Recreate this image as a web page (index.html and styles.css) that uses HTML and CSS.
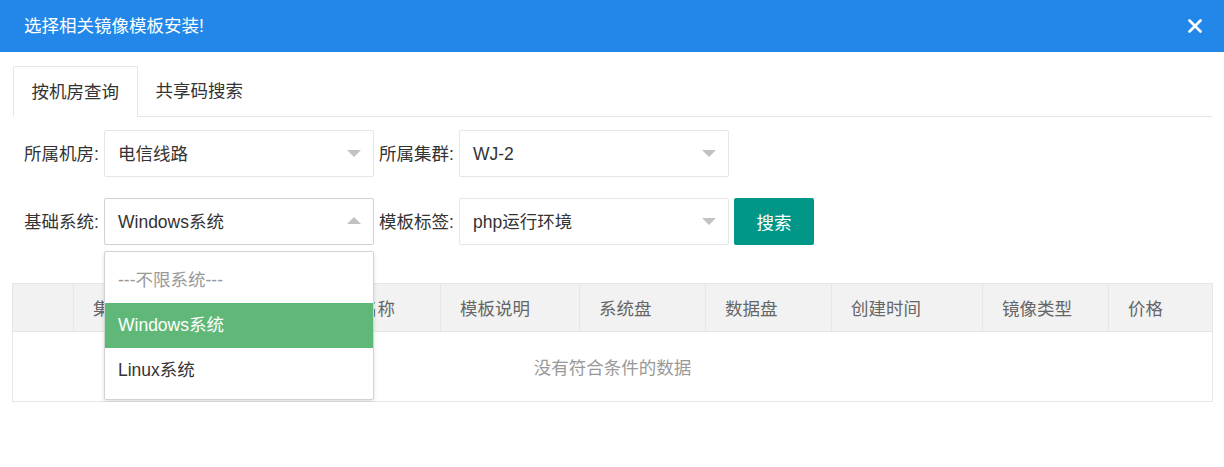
FILE: index.html
```html
<!DOCTYPE html>
<html lang="zh-CN">
<head>
<meta charset="utf-8">
<title>选择相关镜像模板安装!</title>
<link rel="stylesheet" href="styles.css">
</head>
<body>
<div class="layer">
  <div class="layer-title">
    <span class="title-text">选择相关镜像模板安装!</span>
    <span class="close" aria-label="关闭">
      <svg width="14" height="14" viewBox="0 0 14 14"><path d="M1.5 1.5L12.5 12.5M12.5 1.5L1.5 12.5" stroke="#fff" stroke-width="2.6" stroke-linecap="round"/></svg>
    </span>
  </div>
  <div class="layer-content">
    <ul class="tabs">
      <li class="tab active">按机房查询</li>
      <li class="tab">共享码搜索</li>
    </ul>
    <div class="form">
      <div class="form-row">
        <label class="label">所属机房:</label>
        <div class="select"><span class="value">电信线路</span><i class="arrow"></i></div>
        <label class="label label-inner">所属集群:</label>
        <div class="select"><span class="value">WJ-2</span><i class="arrow"></i></div>
      </div>
      <div class="form-row row-two">
        <label class="label">基础系统:</label>
        <div class="select open">
          <span class="value">Windows系统</span><i class="arrow up"></i>
          <dl class="options">
            <dd class="opt placeholder">---不限系统---</dd>
            <dd class="opt selected">Windows系统</dd>
            <dd class="opt">Linux系统</dd>
          </dl>
        </div>
        <label class="label label-inner">模板标签:</label>
        <div class="select"><span class="value">php运行环境</span><i class="arrow"></i></div>
        <button class="btn">搜索</button>
      </div>
    </div>
    <table class="table">
      <thead>
        <tr>
          <th class="c1"></th>
          <th class="c2">集群</th>
          <th class="c3">模板名称</th>
          <th class="c4">模板说明</th>
          <th class="c5">系统盘</th>
          <th class="c6">数据盘</th>
          <th class="c7">创建时间</th>
          <th class="c8">镜像类型</th>
          <th class="c9">价格</th>
        </tr>
      </thead>
      <tbody>
        <tr><td class="none" colspan="9">没有符合条件的数据</td></tr>
      </tbody>
    </table>
  </div>
</div>
</body>
</html>
```
FILE: styles.css
```css
* { box-sizing: border-box; }
html, body { margin: 0; padding: 0; background: #fff; }
body {
  font-family: "Liberation Sans", "Noto Sans CJK SC", sans-serif;
  font-size: 17.5px;
  color: #333;
}
.layer { width: 1224px; }
.layer-title {
  height: 52px;
  background: #2287e9;
  color: #fff;
  display: flex;
  align-items: center;
  justify-content: space-between;
  padding: 0 22px 0 24px;
}
.title-text { font-size: 17.5px; line-height: 24px; }
.close { display: flex; width: 14px; height: 14px; }
.layer-content { padding: 14px 12px 0 12px; }
.tabs {
  list-style: none;
  margin: 0 0 0 1px;
  padding: 0;
  display: flex;
  height: 51px;
  border-bottom: 1px solid #e6e6e6;
}
.tab {
  height: 51px;
  line-height: 50px;
  padding: 0 18px;
  color: #333;
  position: relative;
}
.tab.active {
  border: 1px solid #e6e6e6;
  border-bottom: none;
  border-radius: 2px 2px 0 0;
  background: #fff;
  height: 51px;
  margin-bottom: -1px;
  padding: 0 17.5px;
}
.form { padding: 13px 0 0 6px; }
.form-row { display: flex; align-items: center; height: 47px; }
.row-two { margin-top: 21px; }
.label {
  width: 86px;
  flex: none;
  padding: 0 0 0 6px;
  line-height: 24px;
  white-space: nowrap;
  color: #333;
}
.label-inner { width: 85px; padding-left: 5px; }
.select {
  width: 270px;
  flex: none;
  height: 47px;
  border: 1px solid #e6e6e6;
  border-radius: 2px;
  background: #fff;
  display: flex;
  align-items: center;
  padding-left: 13px;
  position: relative;
}
.select.open { border-color: #d2d2d2; }
.value { line-height: 24px; color: #333; }
.arrow {
  position: absolute;
  right: 12px;
  top: 19px;
  width: 0;
  height: 0;
  border-left: 7.5px solid transparent;
  border-right: 7.5px solid transparent;
  border-top: 7.5px solid #c2c2c2;
}
.arrow.up {
  top: 18px;
  border-top: none;
  border-bottom: 7.5px solid #c2c2c2;
}
.options {
  position: absolute;
  left: -1px;
  top: 52px;
  width: 270px;
  margin: 0;
  padding: 6px 0;
  background: #fff;
  border: 1px solid #d2d2d2;
  border-radius: 2px;
  box-shadow: 0 2px 4px rgba(0, 0, 0, 0.12);
  z-index: 10;
}
.opt {
  margin: 0;
  height: 45px;
  line-height: 45px;
  padding-left: 13px;
  color: #333;
  white-space: nowrap;
}
.opt.placeholder { color: #999; }
.opt.selected { background: #5fb878; color: #fff; }
.btn {
  margin-left: 5px;
  width: 80px;
  flex: none;
  height: 47px;
  border: none;
  border-radius: 2px;
  background: #009688;
  color: #fff;
  font-family: inherit;
  font-size: 17.5px;
  padding: 0;
}
.table {
  margin-top: 38px;
  width: 1200px;
  border-collapse: collapse;
  border: 1px solid #e6e6e6;
  table-layout: fixed;
}
.table th {
  height: 48px;
  background: #f2f2f2;
  border: 1px solid #e6e6e6;
  font-weight: normal;
  color: #666;
  text-align: left;
  padding: 0 0 0 19px;
  white-space: nowrap;
  overflow: hidden;
}
.c1 { width: 61px; }
.c2 { width: 232px; }
.c3 { width: 135px; }
.c4 { width: 139px; }
.c5 { width: 126px; }
.c6 { width: 126px; }
.c7 { width: 151px; }
.c8 { width: 126px; }
.c9 { width: 104px; }
.none {
  height: 70px;
  text-align: center;
  color: #999;
  padding: 0;
}
```
